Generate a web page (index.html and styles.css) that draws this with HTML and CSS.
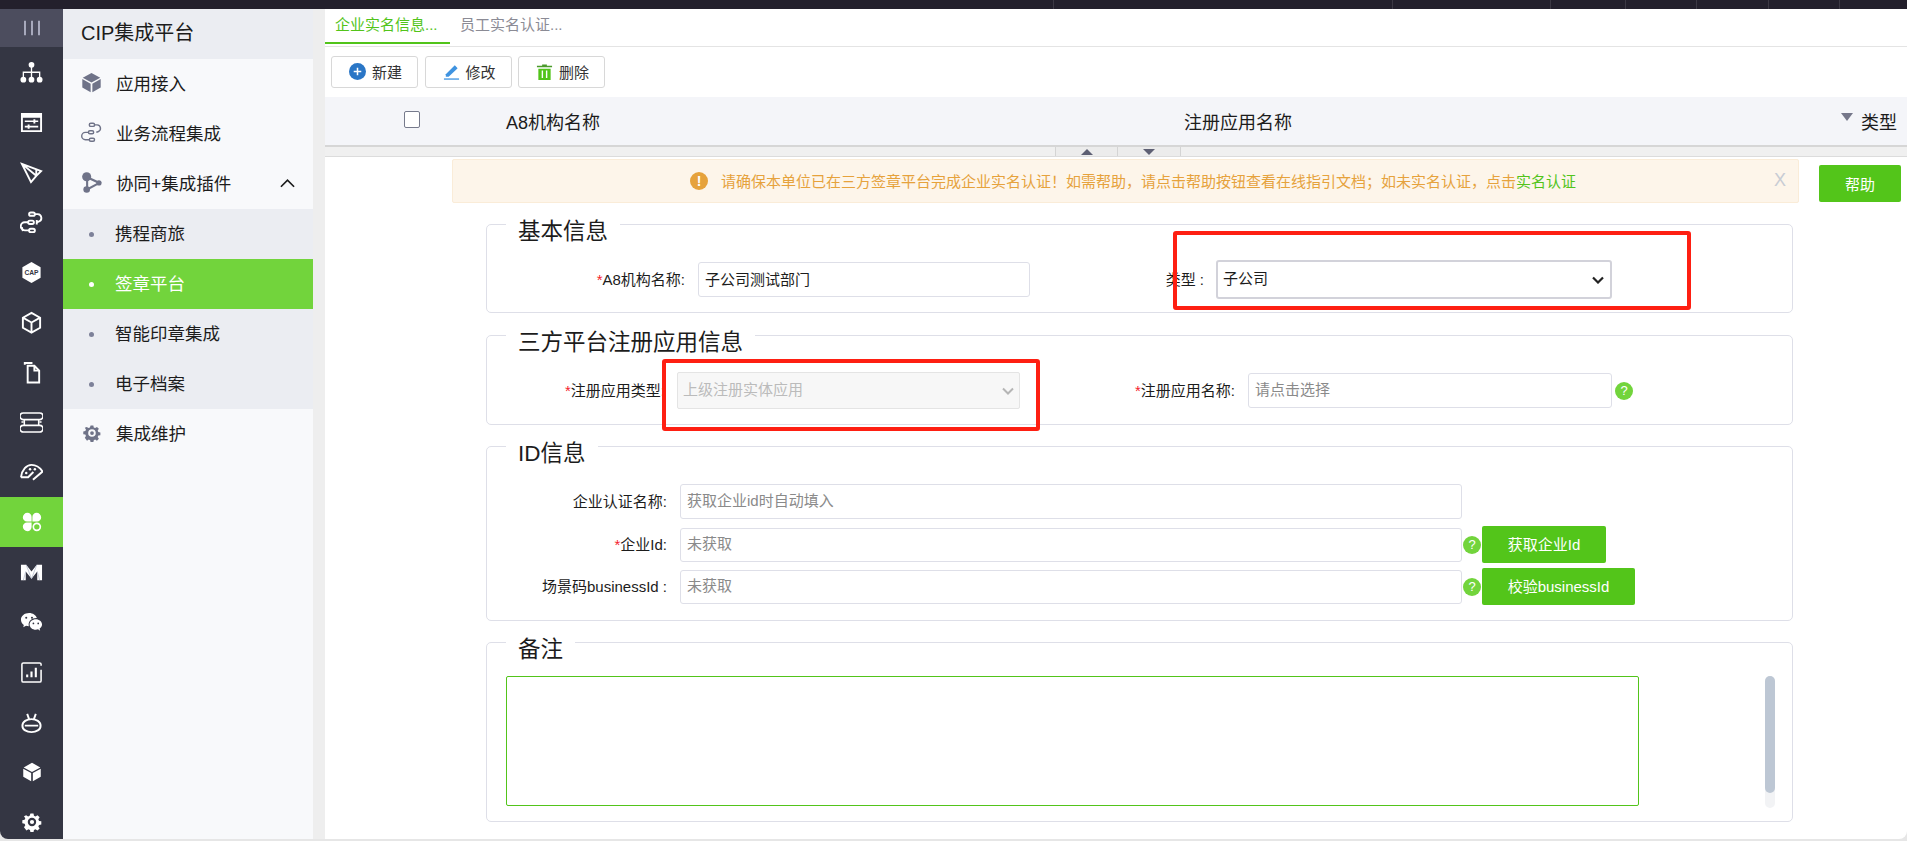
FILE: index.html
```html
<!DOCTYPE html>
<html lang="zh-CN">
<head>
    <meta charset="UTF-8">
    <title>CIP集成平台</title>
    <link rel="stylesheet" href="styles.css">
</head>
<body>
    <div class="topbar"><span></span><span></span><span></span><span></span><span></span><span></span><span></span><span></span></div>
    <div class="app">
        <!-- icon rail -->
        <nav class="rail">
            <div class="rail-toggle"><svg viewBox="0 0 24 24" class="ico toggle-ico"><path d="M1.500 1v22M12 1v22M22.500 1v22"/></svg></div>
            <div class="rail-item"><svg viewBox="0 0 24 24" class="fill"><circle cx="12" cy="4" r="3"/><circle cx="3.500" cy="19.500" r="3"/><circle cx="12" cy="19.500" r="3"/><circle cx="20.500" cy="19.500" r="3"/><path d="M11.300 6h1.400v5h8.500v6h-1.400v-4.600h-7.100V17h-1.400v-4.600H4.200V17H2.800v-6h8.500z"/></svg></div>
            <div class="rail-item"><svg viewBox="0 0 24 24" class="fill"><path fill-rule="evenodd" d="M1 2h22v20H1zM3 7v13h18V7z"/><path d="M5 10h9V8.500h2V10h3v1.600h-3v1.500h-2v-1.500H5zM5 15.500h3V14h2v1.500h9v1.600h-9v1.500H8v-1.500H5z"/></svg></div>
            <div class="rail-item"><svg viewBox="0 0 24 24" class="ico"><path d="M2 3l20 7.500-5 5-5.500 6.500zM2 3l15 12.500M17 9v6.500"/></svg></div>
            <div class="rail-item"><svg viewBox="0 0 24 24" class="ico"><rect x="9.500" y="1.500" width="6" height="3.500" rx="1.700"/><rect x="8.500" y="10" width="6" height="3.500" rx="1.700"/><rect x="9.500" y="18.500" width="6" height="3.500" rx="1.700"/><path d="M15.500 3.300h3a4 4 0 0 1 1 7.800l-2 .6M8.500 11.800H5a4 4 0 0 0 0 8.400h4.500M17.500 9.500v4.500M3 21l-1-4"/></svg></div>
            <div class="rail-item"><svg viewBox="0 0 24 24"><path class="hex" d="M12 1l9.500 5.500v11L12 23l-9.500-5.500v-11z"/><text x="12" y="14.300" class="cap-text">CAP</text></svg></div>
            <div class="rail-item"><svg viewBox="0 0 24 24" class="ico"><path d="M12 2l9 5v10.500L12 22.500l-9-5V7zM3 7l9 5 9-5M12 12v10.500"/></svg></div>
            <div class="rail-item"><svg viewBox="0 0 24 24" class="ico"><path d="M5 4V2h8M8 5h7l5 5v12.500H8zM15 5v5h5"/></svg></div>
            <div class="rail-item"><svg viewBox="0 0 24 24" class="ico thin"><path d="M3.500 2h17a2 2 0 0 1 0 7h-17a2 2 0 0 1 0-7zM3.500 15h17a2 2 0 0 1 0 7h-17a2 2 0 0 1 0-7zM4.500 9v6M19.500 9v6M1.500 11.500h2M20.500 11.500h2"/></svg></div>
            <div class="rail-item"><svg viewBox="0 0 24 24" class="ico"><path d="M1 17C2 9 7 4 12 4c5 0 9 3 11.500 7L13.500 19.500M1 17h7.500l5.500-5.500"/><circle class="dot" cx="6.500" cy="12.500" r="1.300"/><circle class="dot" cx="10.500" cy="8.500" r="1.300"/><circle class="dot" cx="15.500" cy="8.500" r="1.300"/></svg></div>
            <div class="rail-item rail-item-on"><svg viewBox="0 0 24 24" class="fill rail-sm"><path d="M1 6.500A5.500 5.500 0 0 1 6.500 1a5 5 0 0 1 5 5v5.500H6a5 5 0 0 1-5-5zM12.500 6a5 5 0 0 1 5-5A5.500 5.500 0 0 1 23 6.500a5 5 0 0 1-5 5h-5.500zM1 17.500a5 5 0 0 1 5-5h5.500V18a5 5 0 0 1-5 5A5.500 5.500 0 0 1 1 17.500z"/><circle cx="17.800" cy="17.800" r="4.200" class="petal"/></svg></div>
            <div class="rail-item"><svg viewBox="0 0 24 24" class="fill"><path d="M1 4h5.500L12 11l5.500-7H23v16h-5v-9l-6 7.500L6 11v9H1z"/><path class="fold" d="M6.500 4L12 18.500 17.500 4M6 11l-2.500 9M18 11l2.500 9"/></svg></div>
            <div class="rail-item"><svg viewBox="0 0 24 24" class="fill"><path d="M9.500 2C4.800 2 1 5 1 9c0 2.300 1.200 4.200 3 5.500L3.400 17l2.900-1.500c1 .3 2 .5 3 .5-.2-.6-.3-1.300-.3-2 0-3.800 3.500-6.800 8-6.800h.6C16.700 4.300 13.400 2 9.500 2z"/><path d="M23 14c0-3.100-3-5.500-6.500-5.500S10 10.900 10 14s3 5.500 6.500 5.500c.8 0 1.600-.1 2.300-.4l2.200 1.400-.5-2.200c1.500-1 2.500-2.600 2.500-4.300z"/><circle class="hole" cx="6.500" cy="7" r="1.100"/><circle class="hole" cx="12.500" cy="7" r="1.100"/><circle class="hole" cx="14" cy="13" r=".9"/><circle class="hole" cx="19" cy="13" r=".9"/></svg></div>
            <div class="rail-item"><svg viewBox="0 0 24 24" class="ico thin"><path d="M22 5V3.500A1.500 1.500 0 0 0 20.500 2h-17A1.500 1.500 0 0 0 2 3.500v17A1.500 1.500 0 0 0 3.500 22h17a1.500 1.500 0 0 0 1.500-1.500V9"/><path class="bars" d="M7.500 17v-3M12 17v-6M16.500 17V7"/></svg></div>
            <div class="rail-item"><svg viewBox="0 0 24 24" class="ico"><path d="M12 8.500C7 8.500 2.500 11 2.500 15.300S7 22 12 22s9.500-2.400 9.500-6.700S17 8.500 12 8.500zM5 15.300h14M7.500 3l2 5.500M16.500 3l-2 5.500"/></svg></div>
            <div class="rail-item"><svg viewBox="0 0 24 24" class="fill rail-sm"><path d="M12 1l10 5.500L12 12 2 6.500zM1.500 8L11 13.300V23L1.500 17.800zM22.500 8L13 13.300V23l9.500-5.200z"/></svg></div>
            <div class="rail-item"><svg viewBox="0 0 24 24" class="fill rail-sm"><path fill-rule="evenodd" d="M10 1h4l.6 3 2 .9 2.600-1.700 2.800 2.800-1.700 2.600.9 2 3 .6v4l-3 .6-.9 2 1.700 2.600-2.800 2.800-2.600-1.700-2 .9-.6 3h-4l-.6-3-2-.9-2.600 1.700L1.600 18.900l1.700-2.600-.9-2-3-.6v-4l3-.6.9-2-1.700-2.600L4.400 3.200 7 4.900l2-.9zM12 6.500a5.500 5.500 0 1 0 0 11 5.500 5.500 0 0 0 0-11z" transform="scale(.92) translate(1 1)"/><circle cx="12" cy="12" r="2.500"/></svg></div>
        </nav>

        <!-- second level menu -->
        <aside class="menu">
            <div class="menu-title">CIP集成平台</div>
            <div class="menu-item"><svg viewBox="0 0 24 24" class="menu-ico fill"><path d="M12 1l10 5.500L12 12 2 6.500zM1.500 8L11 13.300V23L1.500 17.800zM22.500 8L13 13.300V23l9.500-5.200z"/></svg>应用接入</div>
            <div class="menu-item"><svg viewBox="0 0 24 24" class="menu-ico ico thin"><rect x="9.500" y="1.500" width="6" height="3.500" rx="1.700"/><rect x="8.500" y="10" width="6" height="3.500" rx="1.700"/><rect x="9.500" y="18.500" width="6" height="3.500" rx="1.700"/><path d="M15.500 3.300h3a4 4 0 0 1 1 7.800l-2 .6M8.500 11.800H5a4 4 0 0 0 0 8.400h4.500"/></svg>业务流程集成</div>
            <div class="menu-item"><svg viewBox="0 0 24 24" class="menu-ico"><path class="link" d="M7 6l14 6.500L7 20z"/><circle class="node" cx="6.500" cy="5.500" r="5.200"/><circle class="node" cx="6.500" cy="20" r="3.800"/><circle class="node" cx="20.500" cy="12.500" r="3"/></svg>协同+集成插件<svg viewBox="0 0 16 10" class="chevron"><path d="M1 9l7-7 7 7"/></svg></div>
            <div class="submenu">
                <div class="sub-item">携程商旅</div>
                <div class="sub-item sub-item-on">签章平台</div>
                <div class="sub-item">智能印章集成</div>
                <div class="sub-item">电子档案</div>
            </div>
            <div class="menu-item"><svg viewBox="0 0 24 24" class="menu-ico fill gear"><path fill-rule="evenodd" d="M10 1h4l.6 3 2 .9 2.600-1.700 2.800 2.800-1.700 2.600.9 2 3 .6v4l-3 .6-.9 2 1.700 2.600-2.800 2.800-2.600-1.700-2 .9-.6 3h-4l-.6-3-2-.9-2.600 1.700L1.600 18.900l1.700-2.600-.9-2-3-.6v-4l3-.6.9-2-1.700-2.600L4.400 3.200 7 4.900l2-.9zM12 6.500a5.500 5.500 0 1 0 0 11 5.500 5.500 0 0 0 0-11z" transform="scale(.92) translate(1 1)"/><circle cx="12" cy="12" r="2.500"/></svg>集成维护</div>
        </aside>
        <div class="gutter"></div>

        <main class="main">
            <div class="tabs">
                <div class="tab tab-on">企业实名信息...</div>
                <div class="tab">员工实名认证...</div>
            </div>
            <div class="toolbar">
                <button class="tool-btn"><svg viewBox="0 0 18 18"><circle cx="9" cy="9" r="9" fill="#2a76c6"/><path d="M5 9h8M9 5v8" stroke="#fff" stroke-width="1.600"/></svg>新建</button>
                <button class="tool-btn"><svg viewBox="0 0 18 18"><path d="M3 12L12.500 2.500l3 3L6 14.500H3z" fill="#3f93e0"/><path d="M1 17h16" stroke="#3f93e0" stroke-width="1.400"/></svg>修改</button>
                <button class="tool-btn"><svg viewBox="0 0 18 18"><path d="M6.500 1.500h5v1.500H17v1.500H1V3h5.500z" fill="#4a9a2a"/><path fill-rule="evenodd" d="M2.500 6h13v12h-13zM6 8v8h1.500V8zM10.500 8v8H12V8z" fill="#52c41a"/></svg>删除</button>
            </div>
            <div class="grid-head">
                <div class="grid-check"><span class="checkbox"></span></div>
                <div class="grid-col">A8机构名称</div>
                <div class="grid-col">注册应用名称</div>
                <div class="grid-col grid-col-sort"><span class="sort-arrow"></span>类型</div>
            </div>
            <div class="grid-strip">
                <span class="strip-btn"><span class="tri-up"></span></span>
                <span class="strip-btn"><span class="tri-down"></span></span>
            </div>

            <div class="notice-row">
                <div class="notice">
                    <span class="notice-ico">!</span>
                    <span>请确保本单位已在三方签章平台完成企业实名认证！如需帮助，请点击帮助按钮查看在线指引文档；如未实名认证，点击<a class="notice-link">实名认证</a></span>
                    <span class="notice-close">X</span>
                </div>
                <button class="help-btn">帮助</button>
            </div>

            <form class="form">
                <section class="panel panel-base">
                    <div class="panel-title">基本信息</div>
                    <div class="row">
                        <label class="field-label w-a8"><i>*</i>A8机构名称:</label>
                        <input class="input w-a8-input" value="子公司测试部门">
                        <label class="field-label w-type">类型 :</label>
                        <select class="select-type"><option>子公司</option></select>
                    </div>
                </section>

                <section class="panel panel-app">
                    <div class="panel-title">三方平台注册应用信息</div>
                    <div class="row">
                        <label class="field-label w-apptype"><i>*</i>注册应用类型:</label>
                        <select class="select-app" disabled><option>上级注册实体应用</option></select>
                        <label class="field-label w-appname"><i>*</i>注册应用名称:</label>
                        <input class="input w-appname-input" placeholder="请点击选择">
                        <span class="tip tip-app">?</span>
                    </div>
                </section>

                <section class="panel panel-id">
                    <div class="panel-title">ID信息</div>
                    <div class="id-rows">
                        <div class="row id-first">
                            <label class="field-label w-id">企业认证名称:</label>
                            <input class="input w-id-input" placeholder="获取企业id时自动填入">
                        </div>
                        <div class="row">
                            <label class="field-label w-id"><i>*</i>企业Id:</label>
                            <input class="input w-id-input input-sm" placeholder="未获取">
                            <span class="tip">?</span>
                            <button type="button" class="green-btn">获取企业Id</button>
                        </div>
                        <div class="row">
                            <label class="field-label w-id">场景码businessId :</label>
                            <input class="input w-id-input input-sm" placeholder="未获取">
                            <span class="tip">?</span>
                            <button type="button" class="green-btn green-btn-wide">校验businessId</button>
                        </div>
                    </div>
                </section>

                <section class="panel panel-note">
                    <div class="panel-title">备注</div>
                    <div class="note-row">
                        <textarea class="note"></textarea>
                        <div class="scroll-track"><div class="scroll-thumb"></div></div>
                    </div>
                </section>
            </form>

            <div class="mark mark-type"></div>
            <div class="mark mark-app"></div>
        </main>
    </div>
</body>
</html>
```

FILE: styles.css
```css
* {
    box-sizing: border-box;
}
html, body {
    height: 100%;
}
body {
    margin: 0;
    overflow: hidden;
    background-color: #e6e6e6;
    color: #1c1c1c;
    font-family: "Liberation Sans", "Noto Sans CJK SC", sans-serif;
    font-size: 15px;
}
svg {
    display: block;
}
button, input, select, textarea {
    font-family: inherit;
}

/* window top edge */
.topbar {
    display: grid;
    grid-template-columns: 1053px 339px 158px 75px 71px 72px 71px 1fr;
    height: 9px;
    background-color: #23202c;
}
.topbar span + span {
    border-left: 1px solid #3c3944;
}
.app {
    display: flex;
    height: 830px;
}

/* icon rail */
.rail {
    flex: 0 0 63px;
    background-color: #343643;
    border-bottom-left-radius: 8px;
}
.rail-toggle {
    display: flex;
    align-items: center;
    justify-content: center;
    height: 38px;
    background-color: #4c4d5e;
}
.rail-toggle svg {
    width: 16px;
    height: 16px;
}
.toggle-ico {
    stroke: #d5d8ec !important;
    stroke-width: 2 !important;
}
.rail-item {
    display: flex;
    align-items: center;
    justify-content: center;
    height: 50px;
}
.rail-item svg {
    width: 23px;
    height: 23px;
}
.rail-item svg.rail-sm {
    width: 20px;
    height: 20px;
}
.rail-item-on {
    background-color: #72d43c;
}
.fill {
    fill: #fff;
}
.ico {
    fill: none;
    stroke: #fff;
    stroke-width: 2;
}
.ico.thin {
    stroke-width: 1.6;
}
.bars {
    stroke-width: 2.2;
}
.dot {
    fill: #fff;
    stroke: none;
}
.hole {
    fill: #343643;
}
.fold {
    fill: none;
    stroke: #b4bccd;
    stroke-width: .8;
}
.petal {
    fill: #72d43c;
    stroke: #fff;
    stroke-width: 2;
}
.hex {
    fill: #fff;
}
.cap-text {
    fill: #343643;
    font-size: 7px;
    font-weight: bold;
    text-anchor: middle;
}

/* second level menu */
.menu {
    flex: 0 0 250px;
    background-color: #f8f9fb;
    font-size: 17.5px;
}
.menu-title {
    height: 50px;
    padding-left: 18px;
    background-color: #ebedf2;
    font-size: 20px;
    line-height: 49px;
}
.menu-item {
    display: flex;
    align-items: center;
    height: 50px;
    padding: 0 18px 3px;
}
.menu-ico {
    flex: none;
    width: 21px;
    height: 21px;
    margin-right: 14px;
}
.menu-ico.fill {
    fill: #6f7388;
}
.menu-ico.ico {
    stroke: #6f7388;
}
.menu-ico.gear {
    width: 18px;
    height: 18px;
    margin: 0 15px 0 2px;
}
.node {
    fill: #6f7388;
}
.link {
    fill: none;
    stroke: #6f7388;
    stroke-width: 2.4;
}
.chevron {
    width: 15px;
    height: 10px;
    margin-left: auto;
    fill: none;
    stroke: #1c1c1c;
    stroke-width: 1.8;
}
.submenu {
    background-color: #ebedf2;
}
.sub-item {
    display: flex;
    align-items: center;
    height: 50px;
    padding: 0 0 3px 26px;
}
.sub-item::before {
    content: "";
    width: 5px;
    height: 5px;
    margin: 3px 21px 0 0;
    border-radius: 50%;
    background-color: #7d8199;
}
.sub-item-on {
    background-color: #72d43c;
    color: #fff;
}
.sub-item-on::before {
    background-color: #fff;
}
.gutter {
    flex: 0 0 12px;
    background-color: #eeeeee;
}

/* main area */
.main {
    position: relative;
    flex: 1;
    background-color: #fff;
    border-bottom-right-radius: 8px;
}
.tabs {
    display: flex;
    height: 38px;
    border-bottom: 1px solid #e4e4e4;
}
.tab {
    width: 125px;
    height: 35px;
    padding-left: 10px;
    color: #8b8b95;
    line-height: 32px;
}
.tab-on {
    color: #52c41a;
    border-bottom: 2px solid #52c41a;
}
.toolbar {
    display: flex;
    gap: 6.5px;
    height: 50px;
    padding: 9px 0 0 6px;
}
.tool-btn {
    display: flex;
    align-items: center;
    gap: 6px;
    width: 87px;
    height: 32px;
    padding: 0 0 2px 17px;
    background-color: #fff;
    border: 1px solid #d8d8d8;
    border-radius: 3px;
    color: #333;
    font-size: 15px;
}
.tool-btn svg {
    width: 17px;
    height: 17px;
}
.grid-head {
    display: grid;
    grid-template-columns: 174px 678px 661px 1fr;
    align-items: center;
    height: 50px;
    background-color: #f4f5f9;
    border-bottom: 2px solid #d6d6d6;
    font-size: 18px;
}
.grid-check {
    display: flex;
    justify-content: center;
    margin-top: -3px;
}
.checkbox {
    width: 16px;
    height: 17px;
    background-color: #fff;
    border: 1px solid #767a8c;
    border-radius: 2px;
}
.grid-col {
    padding-left: 7px;
}
.grid-col-sort {
    display: flex;
    padding-left: 3px;
}
.sort-arrow {
    margin: 5px 8px 0 0;
    width: 0;
    height: 0;
    border-left: 6.500px solid transparent;
    border-right: 6.500px solid transparent;
    border-top: 8px solid #75778a;
}
.grid-strip {
    display: flex;
    height: 10px;
    padding-left: 730px;
    background-color: #f0f0f0;
    border-bottom: 1px solid #dcdcdc;
}
.strip-btn {
    display: flex;
    align-items: center;
    justify-content: center;
    width: 63px;
    background-color: #ececec;
    border-right: 1px solid #d4d4d4;
}
.strip-btn:first-child {
    border-left: 1px solid #d4d4d4;
}
.tri-up, .tri-down {
    width: 0;
    height: 0;
    border-left: 6px solid transparent;
    border-right: 6px solid transparent;
}
.tri-up {
    border-bottom: 6px solid #5e6074;
}
.tri-down {
    border-top: 6px solid #5e6074;
}

/* notice */
.notice-row {
    display: flex;
    gap: 20px;
    margin: 2px 6px 0 127px;
}
.notice {
    display: flex;
    flex: 1;
    align-items: center;
    height: 44px;
    padding: 0 0 1px 237px;
    background-color: #fdf5ea;
    border: 1px solid #faecd8;
    border-radius: 2px;
    color: #e6a23c;
}
.notice-ico {
    width: 18px;
    height: 18px;
    margin-right: 13px;
    border-radius: 50%;
    background-color: #e6a23c;
    color: #fff;
    font-weight: bold;
    font-size: 14px;
    line-height: 18px;
    text-align: center;
}
.notice-link {
    color: #52c41a;
}
.notice-close {
    margin-left: auto;
    margin-right: 12px;
    color: #c8ccd4;
    font-size: 18px;
}
.help-btn {
    width: 82px;
    height: 37px;
    margin-top: 6px;
    background-color: #53c51a;
    border: none;
    border-radius: 2px;
    color: #fff;
    font-size: 15px;
}

/* form panels */
.form {
    width: 1307px;
    margin: 21px 0 0 161px;
}
.panel {
    margin-bottom: 21px;
    background-color: #fff;
    border: 1px solid #dedfe8;
    border-radius: 5px;
}
.panel:last-child {
    margin-bottom: 0;
}
.panel-title {
    width: fit-content;
    margin: -6px 0 0 19px;
    padding: 0 12px;
    background-color: #fff;
    font-size: 22.5px;
    line-height: 26px;
}
.panel-base {
    height: 89px;
    margin-bottom: 22px;
}
.panel-base .row {
    margin-top: 15px;
}
.panel-app {
    height: 90px;
}
.panel-app .row {
    margin-top: 16px;
}
.panel-id {
    height: 175px;
}
.panel-note {
    height: 180px;
}
.row {
    display: flex;
    align-items: center;
}
.field-label {
    flex: none;
    margin-right: 13px;
    padding-bottom: 2px;
    text-align: right;
}
.field-label i {
    color: #f5222d;
    font-style: normal;
}
.input {
    flex: none;
    height: 35px;
    padding: 0 6px 2px;
    background-color: #fff;
    border: 1px solid #dedfe8;
    border-radius: 3px;
    color: #1c1c1c;
    font-size: 15px;
}
.input::placeholder {
    color: #8a8a8a;
    opacity: 1;
}
.input-sm {
    height: 34px;
}
.w-a8 {
    width: 198px;
}
.w-a8-input {
    width: 332px;
}
.w-type {
    width: 174px;
    margin-right: 12px;
}
.select-type {
    width: 396px;
    height: 39px;
    padding: 0 0 2px 5px;
    appearance: none;
    background: #fff url("data:image/svg+xml,%3Csvg xmlns='http://www.w3.org/2000/svg' viewBox='0 0 12 8'%3E%3Cpath d='M1 1.500l5 5 5-5' fill='none' stroke='%23222' stroke-width='2.200'/%3E%3C/svg%3E") no-repeat right 6px center / 12px 8px;
    border: 2px solid #d2d2da;
    border-radius: 3px;
    color: #1c1c1c;
    font-size: 15px;
}
.w-apptype {
    width: 178px;
    margin-right: 12px;
}
.select-app {
    width: 343px;
    height: 37px;
    padding: 0 0 2px 5px;
    appearance: none;
    background: #f7f7f7 url("data:image/svg+xml,%3Csvg xmlns='http://www.w3.org/2000/svg' viewBox='0 0 12 8'%3E%3Cpath d='M1 1.500l5 5 5-5' fill='none' stroke='%23b5b5b5' stroke-width='2'/%3E%3C/svg%3E") no-repeat right 5px center / 12px 8px;
    border: 1px solid #e4e4e4;
    border-radius: 2px;
    color: #bbb;
    font-size: 15px;
    opacity: 1;
}
.w-appname {
    width: 215px;
}
.w-appname-input {
    width: 364px;
}
.tip {
    flex: none;
    width: 18px;
    height: 18px;
    margin-left: 1px;
    border-radius: 50%;
    background-color: #72d43c;
    color: #fff;
    font-size: 13px;
    line-height: 18px;
    text-align: center;
}
.tip-app {
    margin-left: 3px;
}
.id-rows {
    display: flex;
    flex-direction: column;
    gap: 5px;
    margin-top: 17px;
}
.id-first {
    margin-bottom: 2px;
}
.w-id {
    width: 180px;
}
.w-id-input {
    width: 782px;
}
.green-btn {
    width: 124px;
    height: 37px;
    margin-left: 1px;
    padding: 0 0 2px;
    background-color: #53c51a;
    border: none;
    border-radius: 2px;
    color: #fff;
    font-size: 15px;
}
.green-btn-wide {
    width: 153px;
}
.note-row {
    display: flex;
    margin: 13px 0 0 19px;
}
.note {
    flex: none;
    width: 1133px;
    height: 130px;
    background-color: #fff;
    border: 1px solid #52c41a;
    border-radius: 2px;
    outline: none;
    resize: none;
}
.scroll-track {
    width: 10px;
    height: 132px;
    margin-left: 126px;
    background-color: #f2f3f5;
    border-radius: 5px;
}
.scroll-thumb {
    height: 117px;
    background-color: #bdc7d4;
    border-radius: 5px;
}

/* red boxes drawn over the screenshot */
.mark {
    position: absolute;
    border: 4px solid #fe1f12;
    border-radius: 3px;
    pointer-events: none;
}
.mark-type {
    left: 848px;
    top: 222px;
    width: 518px;
    height: 79px;
}
.mark-app {
    left: 337px;
    top: 350px;
    width: 378px;
    height: 72px;
}
```
